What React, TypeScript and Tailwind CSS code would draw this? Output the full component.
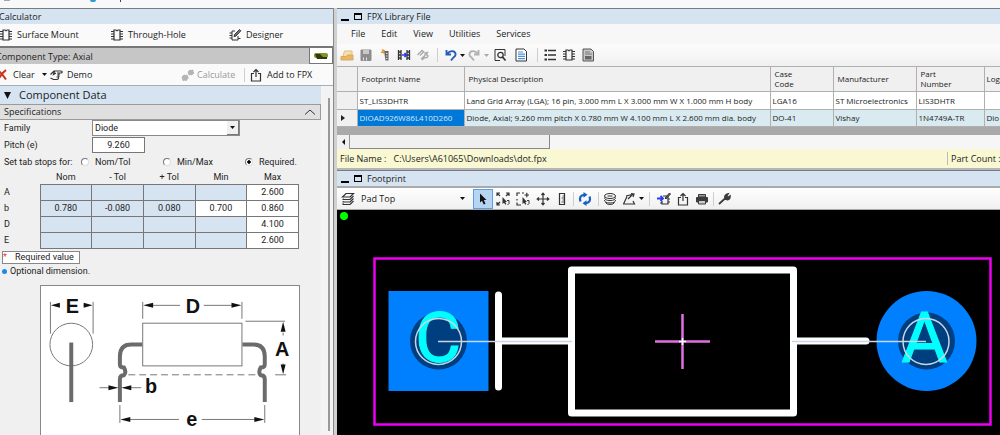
import React, { useState } from 'react';
import clsx from 'clsx';

interface IconProps {
  className?: string;
}

interface Dimension {
  name: string;
  values: string[];
}

interface Part {
  name: string;
  description: string;
  caseCode: string;
  manufacturer: string;
  partNumber: string;
  log: string;
}

const dimensions: Dimension[] = [
  { name: 'A', values: ['', '', '', '', '2.600'] },
  { name: 'b', values: ['0.780', '-0.080', '0.080', '0.700', '0.860'] },
  { name: 'D', values: ['', '', '', '', '4.100'] },
  { name: 'E', values: ['', '', '', '', '2.600'] },
];

const columns = ['Nom', '- Tol', '+ Tol', 'Min', 'Max'];

const parts: Part[] = [
  {
    name: 'ST_LIS3DHTR',
    description: 'Land Grid Array (LGA); 16 pin, 3.000 mm L X 3.000 mm W X 1.000 mm H body',
    caseCode: 'LGA16',
    manufacturer: 'ST Microelectronics',
    partNumber: 'LIS3DHTR',
    log: '',
  },
  {
    name: 'DIOAD926W86L410D260',
    description: 'Diode, Axial; 9.260 mm pitch X 0.780 mm W 4.100 mm L X 2.600 mm dia. body',
    caseCode: 'DO-41',
    manufacturer: 'Vishay',
    partNumber: '1N4749A-TR',
    log: 'Dio',
  },
];

/* ---------- Icons ---------- */

const Svg = ({ className, children }: IconProps & { children: React.ReactNode }) => (
  <svg viewBox="0 0 14 14" fill="none" stroke="#333" strokeWidth="1" className={clsx('size-3.5 shrink-0', className)} aria-hidden="true">
    {children}
  </svg>
);

const ChipIcon = () => (
  <Svg>
    <path d="M4 2h2q1 1.6 2 0h2v10H4zM1 3.5h3M1 6h3M1 8.5h3M1 11h3M10 3.5h3M10 6h3M10 8.5h3M10 11h3" strokeWidth="1.2" />
  </Svg>
);

const DesignIcon = () => (
  <Svg>
    <path d="M7 3H4v9h6V8M1.5 5H4M1.5 7.5H4M1.5 10H4M10 10.5h2.500" />
    <path d="M6 8.500l.5-2L11.500 1.500l1.300 1.300L8 8z" fill="#777" />
  </Svg>
);

const ClearIcon = () => (
  <Svg>
    <path d="M2 2.500q4 3 8 9M10 2q-5 4-8 10" stroke="#c8321e" strokeWidth="2" />
  </Svg>
);

const HandIcon = () => (
  <Svg>
    <path d="M1.500 6.500L5 3h7q1.200 0 1.200 1T12 5H8M8 5h1.200q1 0 1 1t-1 1H8M9 7q1 0 1 1t-1 1H7.500M8.800 9q.8 0 .8 1t-1.600 1.500H4.500L1.500 10M5.500 3L4.500 6.500 7 5" strokeWidth="1.200" />
  </Svg>
);

const GearsIcon = () => (
  <Svg>
    <path d="M9 2l1.500.5L12 2v2l1 1-1.500 1-.5 1-1.500-.5L8 7l-.5-2L7 4zM3 7l1.500.5L6 7l.5 2 1 1-1.500 1-.5 1.500-1.500-.5-2 .5L1.500 10.500 1 9z" fill="#b4b4b4" stroke="#b4b4b4" />
  </Svg>
);

const ExportIcon = () => (
  <Svg>
    <path d="M5 5.500H2.500V13h9V5.500H9M7 9V1.500M4.500 4L7 1.500 9.500 4" strokeWidth="1.200" />
  </Svg>
);

const FolderIcon = () => (
  <Svg>
    <path d="M2 11.500L4.500 3h7.500v8z" fill="#f8dfae" stroke="#e2bd7d" />
    <path d="M1 12V8.500h5L7.500 7H13v5z" fill="#e9b668" stroke="#d9a961" />
  </Svg>
);

const SaveIcon = () => (
  <Svg>
    <path d="M2 2h10v10.500H2z" fill="#8d8d8d" stroke="#8d8d8d" />
    <path d="M4 2h6v4H4z" fill="#c9c9c9" stroke="none" />
    <path d="M4.500 9.500v3M7.500 9.500v3" stroke="#ddd" />
  </Svg>
);

const NewPartIcon = () => (
  <Svg>
    <path d="M6 3h4.500v9.500H7.500z" fill="#666" stroke="none" />
    <path d="M8 5.500h1.500M8 8h1.500M8 10.500h1.500" stroke="#ddd" />
    <path d="M3 4.500l4-2M4 1.500l2.500 4M5.500 1.500v4" stroke="#dc9a33" strokeWidth="1.300" />
  </Svg>
);

const MergeIcon = () => (
  <Svg>
    <path d="M1.500 2v10M4 2v10M1 4h3M1 7h3M1 10h3M10 2v10M12.500 2v10M10 4h3M10 7h3M10 10h3" strokeWidth="1.300" />
    <path d="M5 7h4M7.500 5L9.500 7l-2 2" stroke="#2a3cf0" strokeWidth="1.700" />
  </Svg>
);

const WrenchIcon = () => (
  <Svg>
    <path
      d="M2 12L8 6.500M8.200 6.500q-1-3 1.600-4.200l1-.2-1.300 2.200 1.400 1.300 2-1.500q.2 3-2.500 3.400z"
      stroke="#3c3c3c"
      fill="#3c3c3c"
      strokeWidth="1.800"
    />
  </Svg>
);

const ToolsIcon = () => (
  <Svg>
    <path d="M1.500 7L6 2.500l2.500 2M4 7.500l4-4M5 11l4-3.500q-.5-3 2.500-3l-1 2 1.500 1.500q-1 2.500-3.500 1.500L6 12" stroke="#ababab" strokeWidth="1.400" />
  </Svg>
);

const UndoIcon = ({ muted = false }: { muted?: boolean }) => (
  <Svg className={clsx(muted && '-scale-x-100')}>
    <path d="M2.500 2v4.500H7M3 6q3-4 7-2.500 3.500 3-.5 6l-2.500 3" stroke={muted ? '#b2b2b2' : '#245fb4'} strokeWidth="1.900" />
  </Svg>
);

const PreviewIcon = () => (
  <Svg>
    <path d="M12 8V1.500H2v11h5" />
    <circle cx="7.500" cy="7" r="2.700" strokeWidth="1.300" />
    <path d="M9.500 9l3 3.500" strokeWidth="1.700" />
  </Svg>
);

const PageIcon = () => (
  <Svg>
    <path d="M2 1h8l2.500 2.500V13H2z" fill="#fff" />
    <path d="M4 4h5M4 6.200h7M4 8.400h7M4 10.600h7" stroke="#4a93d8" strokeWidth="1.200" />
  </Svg>
);

const ListIcon = () => (
  <Svg>
    <path d="M5 2.500h8M5 7h8M5 11.500h8" strokeWidth="1.500" />
    <path d="M1.500 2.500H4M1.500 7H4M1.500 11.500H4" strokeWidth="2.200" />
  </Svg>
);

const ReportIcon = () => (
  <Svg>
    <path d="M2 1h8l2.500 2.500V13H2z" fill="#c8c8c8" stroke="#555" />
    <path d="M4 4h5M4 6h7" stroke="#777" />
    <path d="M4 8h6.500v3.500H4z" fill="#666" stroke="none" />
  </Svg>
);

const LayersIcon = () => (
  <Svg>
    <path d="M1.500 5l3.500-3.500h7.500L9 5zM12.500 4L9 7.500H2M12.500 6.500L9 10H2M12.500 9L9 12.500H1.500M3 7l-1.500.5M3 9.500L1.500 10M2.500 11.500l-1 1" strokeWidth="1.200" />
  </Svg>
);

const PointerIcon = () => (
  <Svg>
    <path d="M4 1.500v9l2-1.800 1.700 3.800 1.800-.8L7.800 8h2.700z" fill="#111" stroke="none" />
  </Svg>
);

const SelectIcon = ({ plus = false }: { plus?: boolean }) => (
  <Svg>
    <path d={plus ? 'M4 1H1v3M1 7v1.500M1 10.500V13h4M6 1h2M8.500 3H13M10.800 .8v4.400' : 'M1 4V1h3M1.200 1.200L4 4M10 1h3v3M13 1l-3 3M1 10v3h3M1 13l3-3'} strokeWidth="1.200" />
    <path d="M6.500 5v7l1.500-1.200 1.300 2 1-.7-1-2H11z" fill="#333" stroke="none" />
    <path d="M11 8.500h2v3l-1.500 1.500" />
  </Svg>
);

const MoveIcon = () => (
  <Svg>
    <path d="M7 1v12M1 7h12M5.500 3L7 1.200 8.500 3M5.500 11L7 12.800 8.500 11M3 5.500L1.200 7 3 8.500M11 5.500L12.800 7 11 8.500" strokeWidth="1.200" />
  </Svg>
);

const RulerIcon = () => (
  <Svg>
    <path d="M4.500 1.500h5v11h-5z" strokeWidth="1.200" />
    <path d="M7.500 4h2M6.500 6h3M7.500 8h2M6.500 10h3" strokeWidth=".8" />
  </Svg>
);

const RefreshIcon = () => (
  <Svg>
    <path d="M2.500 9.500Q.5 4 6 2.800M11.500 4.500q2 5.500-3.500 6.700" stroke="#155ec2" strokeWidth="2.200" />
    <path d="M5.500 0l4 2.800-4 3zM8.500 8.200l-4 3 4 2.800z" fill="#155ec2" stroke="none" />
  </Svg>
);

const StackIcon = () => (
  <Svg>
    <ellipse cx="7" cy="4" rx="5.500" ry="2.500" />
    <path d="M4.500 4h5" />
    <path d="M1.500 5.500q0 3 5.500 3t5.500-3M1.500 8q0 3 5.500 3t5.500-3M2.500 10.500q1 2 4.500 2t4.500-2" />
  </Svg>
);

const MeasureIcon = () => (
  <Svg>
    <path d="M1 12h11.500L11 9M1.500 12L5 4.500M4 4l6-1.500M6 7l5-5M9 1.500l3 .5-1 3" strokeWidth="1.200" />
  </Svg>
);

const SendChipIcon = () => (
  <Svg>
    <path d="M6 4h5v8H5V9M11 7h2M11 10h2M3 11h2" strokeWidth="1.200" />
    <path d="M8 6l4.500-5 1 1L9 7z" fill="#666" />
    <path d="M0 6.500h5M3.500 4L6 6.500 3.500 9" stroke="#2a3cf0" strokeWidth="1.800" />
  </Svg>
);

const PrintIcon = () => (
  <Svg>
    <path d="M3.500 2.500h7V5h-7z" fill="#999" stroke="#3b3b3b" />
    <path d="M1.500 5.500h11v4.500h-11z" fill="#3b3b3b" stroke="#3b3b3b" />
    <path d="M3.500 8.500h7V12h-7z" fill="#ccc" stroke="#3b3b3b" />
  </Svg>
);

const Caret = ({ muted = false }: { muted?: boolean }) => (
  <svg viewBox="0 0 5 3" className={clsx('w-[5px] h-[3px] shrink-0', muted ? 'fill-[#aaa]' : 'fill-[#111]')} aria-hidden="true">
    <path d="M0 0h5L2.500 3z" />
  </svg>
);

/* ---------- Small building blocks ---------- */

const Separator = () => <span className="w-px h-3.5 bg-[#cfcfcf] shrink-0" />;

interface ToolProps {
  label: string;
  className?: string;
  children: React.ReactNode;
}

const Tool = ({ label, className, children }: ToolProps) => (
  <button type="button" aria-label={label} className={clsx('flex items-center justify-center shrink-0', className)}>
    {children}
  </button>
);

const PaneHeader = ({ title }: { title: string }) => (
  <div className="flex items-center h-4 bg-[#d6e4f2] border-t border-[#777b82] pl-1 gap-[5px]">
    <button type="button" aria-label="Minimize" className="w-2 h-2 border-b-2 border-black" />
    <button type="button" aria-label="Maximize" className="w-2 h-[7px] border border-t-2 border-black" />
    <h2 className="text-[9px] leading-[14px]">{title}</h2>
  </div>
);

/* ---------- Axial lead drawing ---------- */

function AxialDrawing() {
  return (
    <svg viewBox="40 285 260 164" className="block w-full" role="img" aria-label="Axial component dimensions">
      <g fill="none" stroke="#777" strokeWidth="1">
        <circle cx="70.500" cy="344" r="21.500" />
        <rect x="142.500" y="322.500" width="100" height="43" />
        <path d="M49.500 301v32M92.500 301v32M142.500 301v17M242.500 301v17M246 320.500h40M276 374.500h11M119.500 405v18M265.500 405v18" />
        <path d="M128 374.500h132" strokeDasharray="7 4" />
        <path d="M56 304.500h3M83 304.500h3M151 304.500h29M204 304.500h30M284 332v3M284 363v3M99 387.500h10M130 387.500h11M128 419.500h51M202 419.500h56" />
      </g>
      <g fill="none" stroke="#6b6b6b" strokeWidth="4">
        <path d="M70.500 342v60" />
        <path d="M142 344h-11q-11.500 0-11.500 12v8q0 3 4 3 3 5 0 8-4 0-4 4v23" />
        <path d="M243 344h11q11.500 0 11.500 12v8q0 3-4 3-3 5 0 8 4 0 4 4v23" />
      </g>
      <g fill="#111">
        <path d="M50 304.500l9-2.500v5zM92 304.500l-9-2.500v5zM143 304.500l10-2.500v5zM242 304.500l-10-2.500v5z" />
        <path d="M284 321l-2.500 10h5zM284 374l-2.500-10h5zM118 387.500l-10-2.500v5zM121 387.500l10-2.500v5z" />
        <path d="M120 419.500l10-2.500v5zM265 419.500l-10-2.500v5z" />
      </g>
      <g className="font-bold" fill="#111" fontFamily="'Liberation Sans', Arial, sans-serif" fontSize="20" textAnchor="middle">
        <text x="71.500" y="312">E</text>
        <text x="193" y="312">D</text>
        <text x="283" y="356">A</text>
        <text x="151" y="393">b</text>
        <text x="192" y="426">e</text>
      </g>
    </svg>
  );
}

/* ---------- Footprint canvas ---------- */

function FootprintCanvas() {
  return (
    <svg viewBox="337 210 663 225" className="block w-full" role="img" aria-label="Axial diode footprint, pad top">
      <circle cx="344" cy="216" r="4" fill="#00ff00" />
      <rect x="374.500" y="258.500" width="616" height="166" fill="none" stroke="#f000f0" strokeWidth="2.500" />
      <rect x="388.500" y="291" width="100" height="100" fill="#007fff" />
      <circle cx="926.500" cy="341" r="50" fill="#007fff" />
      <circle cx="438.500" cy="341" r="28.500" fill="#003f7f" />
      <circle cx="926.500" cy="341" r="28.500" fill="#003f7f" />
      <g fill="none" stroke="#fff" strokeWidth="7" strokeLinecap="round" strokeLinejoin="round">
        <path d="M498.500 295v92M500 341h71M797 341h69" />
        <rect x="571.500" y="270" width="222" height="143" />
      </g>
      <g fill="#00ffff" stroke="#00ffff" strokeWidth="1" fontFamily="Roboto, 'Liberation Sans', sans-serif" fontSize="71" textAnchor="middle">
        <text x="438" y="362">C</text>
        <text x="924.500" y="362">A</text>
      </g>
      <g fill="none" stroke="#c9d6e6" strokeWidth="1.500">
        <circle cx="438.500" cy="341.500" r="23" />
        <circle cx="926" cy="341.500" r="23" />
        <path d="M438 341.500h134M792 341.500h134" />
      </g>
      <path d="M655 341.500h55M682.500 314v55" stroke="#e070e0" strokeWidth="2.500" />
      <path d="M679 341.500h7M682.500 338v7" stroke="#fff" strokeWidth="1.500" />
    </svg>
  );
}

/* ---------- Left side ---------- */

function Calculator() {
  const [family, setFamily] = useState('Diode');
  const [pitch, setPitch] = useState('9.260');
  const [tabStops, setTabStops] = useState('Required.');

  return (
    <aside className="w-[334px] shrink-0 flex flex-col bg-[#f0f0f0] border-r border-[#8a8a8a] overflow-hidden">
      <h2 className="h-4 border-t border-[#777b82] bg-[#d6e4f2] text-[9px] leading-[15px]">
        <span className="-ml-px">Calculator</span>
      </h2>

      <nav className="h-[22px] flex items-center bg-[#fafafa] text-[9px]">
        <button type="button" className="w-[111px] flex items-center gap-1 -ml-px"><ChipIcon />Surface Mount</button>
        <button type="button" className="w-[118px] flex items-center gap-1"><ChipIcon />Through-Hole</button>
        <button type="button" className="flex items-center gap-1"><DesignIcon />Designer</button>
      </nav>

      <div className="h-[18px] flex justify-between border-t-2 border-[#777] bg-[#c6c6c6] text-[9px] leading-[17px]">
        <span className="-ml-1">Component Type: Axial</span>
        <span className="w-6 flex items-center justify-center bg-white border border-t-0 border-[#777]">
          <svg viewBox="0 0 14 6" className="w-3.5 h-1.5" aria-hidden="true">
            <rect x="0" y="0" width="14" height="5" rx="2" fill="#85942a" />
            <path d="M1 1h5l3 3h4v2H3z" fill="#303b10" />
          </svg>
        </span>
      </div>

      <div className="h-[22px] flex items-center bg-[#fafafa] border-b border-[#a9adb2] text-[9px]">
        <button type="button" className="w-[53px] flex items-center gap-[3px] -ml-1"><ClearIcon />Clear<span className="ml-1"><Caret /></span></button>
        <button type="button" className="w-[132px] flex items-center gap-1"><HandIcon />Demo</button>
        <button type="button" className="w-[63px] flex items-center gap-0.5 text-[#999]" disabled><GearsIcon />Calculate</button>
        <Separator />
        <button type="button" className="flex items-center gap-1 ml-1"><ExportIcon />Add to FPX</button>
      </div>

      <div className="flex flex-1 min-h-0">
        <div className="flex-1 min-w-0">
          <button type="button" className="w-full h-[18px] flex items-center gap-2 pl-1 bg-[#d6e4f2] text-[11px] leading-4">
            <svg viewBox="0 0 7 7" className="size-[7px]" aria-hidden="true"><path d="M0 0h7L3.500 7z" fill="#111" /></svg>
            Component Data
          </button>
          <button type="button" className="w-full h-4 flex items-center justify-between pl-1 pr-1 bg-[#e0e0e0] border border-l-0 border-[#9a9a9a] text-[9px] leading-[14px]">
            Specifications
            <svg viewBox="0 0 12 6" className="w-3 h-1.5" fill="none" stroke="#333" aria-hidden="true"><path d="M1 5.500L6 1l5 4.500" /></svg>
          </button>

          <form className="font-[Roboto,'Liberation_Sans',sans-serif] text-[9px] leading-3" onSubmit={(e) => e.preventDefault()}>
            <div className="h-4 flex items-center pl-1">
              <label htmlFor="family" className="w-[88px]">Family</label>
              <div className="relative w-[148px]">
                <select
                  id="family"
                  value={family}
                  onChange={(e) => setFamily(e.target.value)}
                  className="block w-full h-4 appearance-none bg-white border border-[#8a8a8a] pl-0.5 leading-[14px]"
                >
                  <option>Diode</option>
                  <option>Resistor</option>
                </select>
                <span className="pointer-events-none absolute right-px top-px w-3 h-3.5 flex items-center justify-center bg-[#f0f0f0] border-r border-b border-[#777]">
                  <Caret />
                </span>
              </div>
            </div>
            <div className="h-[17px] flex items-center pl-1">
              <label htmlFor="pitch" className="w-[88px]">Pitch (e)</label>
              <input
                id="pitch"
                value={pitch}
                onChange={(e) => setPitch(e.target.value)}
                className="w-[53px] h-4 bg-white border border-[#777] text-center"
              />
            </div>
            <fieldset className="h-[18px] flex items-center pl-1">
              <legend className="float-left w-[77px]">Set tab stops for:</legend>
              {['Nom/Tol', 'Min/Max', 'Required.'].map((option) => (
                <label key={option} className="w-[82px] flex items-center gap-1.5 whitespace-nowrap">
                  <input
                    type="radio"
                    name="tabStops"
                    checked={tabStops === option}
                    onChange={() => setTabStops(option)}
                    className="appearance-none size-2 rounded-full bg-white border border-[#ddd] border-t-[#777] border-l-[#777] checked:bg-[radial-gradient(#000_35%,#fff_45%)]"
                  />
                  {option}
                </label>
              ))}
            </fieldset>

            <table className="table-fixed border-collapse w-[299px]">
              <thead>
                <tr className="h-[13px]">
                  <th className="w-10" aria-label="Dimension" />
                  {columns.map((c) => (
                    <th key={c} className="font-normal p-0">{c}</th>
                  ))}
                </tr>
              </thead>
              <tbody>
                {dimensions.map((dim) => (
                  <tr key={dim.name} className="h-4">
                    <th className="p-0 pl-1 text-left font-normal">{dim.name}</th>
                    {dim.values.map((value, i) => (
                      <td key={columns[i]} className="p-0 border border-[#777]">
                        <input
                          aria-label={`${dim.name} ${columns[i]}`}
                          defaultValue={value}
                          className={clsx(
                            'block w-full h-[15px] text-center',
                            i === 4 || (i === 3 && value) ? 'bg-white' : 'bg-[#d6e4f2]'
                          )}
                        />
                      </td>
                    ))}
                  </tr>
                ))}
              </tbody>
            </table>

            <p className="relative ml-0.5 mt-0.5 w-[78px] h-[13px] bg-white border border-[#888] pl-3 leading-[11px] whitespace-nowrap">
              <span className="absolute left-0 top-0 text-red-500">*</span>
              Required value
            </p>
            <p className="flex items-center gap-[3px] pl-0.5 h-[15px]">
              <span className="size-[5px] rounded-full bg-[#1f87e8]" />
              Optional dimension.
            </p>
          </form>

          <div className="mt-1.5 ml-10 w-[260px] bg-white border border-[#888]">
            <AxialDrawing />
          </div>
        </div>
        <div className="w-3 flex justify-end pr-[3px] pt-3 pb-1 bg-[#f3f3f3]">
          <span className="w-0.5 bg-[#999]" />
        </div>
      </div>
    </aside>
  );
}

/* ---------- Right side ---------- */

function LibraryFile() {
  return (
    <section>
      <PaneHeader title="FPX Library File" />
      <nav className="h-5 flex items-center gap-4 pl-3.5 bg-[#f7f7f7] text-[9px]">
        {['File', 'Edit', 'View', 'Utilities', 'Services'].map((item) => (
          <button key={item} type="button">{item}</button>
        ))}
      </nav>
      <div className="h-[22px] flex items-center pl-[3px] bg-linear-to-b from-[#fcfcfc] to-[#f0f0f0]">
        <Tool label="Open" className="w-[14px]"><FolderIcon /></Tool>
        <Tool label="Save" className="w-6"><SaveIcon /></Tool>
        <Tool label="New part" className="w-[14px]"><NewPartIcon /></Tool>
        <Tool label="Merge" className="w-6"><MergeIcon /></Tool>
        <Tool label="Tools" className="w-[14px]"><ToolsIcon /></Tool>
        <span className="w-3 flex justify-end pr-1"><Separator /></span>
        <Tool label="Undo" className="w-[18px]"><UndoIcon /></Tool>
        <Tool label="Undo history" className="w-1"><Caret /></Tool>
        <Tool label="Redo" className="w-5"><UndoIcon muted /></Tool>
        <Tool label="Redo history" className="w-1"><Caret muted /></Tool>
        <Tool label="Preview" className="w-6"><PreviewIcon /></Tool>
        <Tool label="Page" className="w-[18px]"><PageIcon /></Tool>
        <span className="w-3.5 flex justify-center"><Separator /></span>
        <Tool label="List" className="w-3"><ListIcon /></Tool>
        <Tool label="Chip" className="w-[26px]"><ChipIcon /></Tool>
        <Tool label="Report" className="w-3"><ReportIcon /></Tool>
      </div>

      <div className="bg-[#a9a9a9] pb-2">
        <table className="table-fixed w-full border-collapse text-[8px] leading-[10px] whitespace-nowrap">
          <colgroup>
            <col className="w-5" />
            <col className="w-[107px]" />
            <col className="w-[306px]" />
            <col className="w-[63px]" />
            <col className="w-[83px]" />
            <col className="w-[68px]" />
            <col />
          </colgroup>
          <thead>
            <tr className="h-[25px] bg-[#f0f0f0] text-left border-t border-b border-[#b0b0b0] *:font-normal *:border-r *:border-[#b0b0b0] *:last:border-r-0 *:p-0 *:pl-1 *:last:pl-0.5">
              <th aria-label="Row" />
              <th>Footprint Name</th>
              <th>Physical Description</th>
              <th>Case<br />Code</th>
              <th>Manufacturer</th>
              <th>Part<br />Number</th>
              <th>Log</th>
            </tr>
          </thead>
          <tbody>
            {parts.map((part, i) => (
              <tr
                key={part.name}
                className={clsx(
                  'border-b border-[#b0b0b0] *:border-r *:border-[#b0b0b0] *:last:border-r-0 *:p-0 *:pl-0.5',
                  i === 1 ? 'h-[17px] bg-[#d9eaf1]' : 'h-[18px] bg-white'
                )}
              >
                <td className="bg-[#f0f0f0]">
                  {i === 1 && (
                    <svg viewBox="0 0 4 6" className="w-1 h-1.5 ml-0.5" aria-hidden="true"><path d="M0 0l4 3-4 3z" fill="#222" /></svg>
                  )}
                </td>
                <td className={clsx(i === 1 && 'bg-[#0078d7] text-[#d5e8fa]')}>{part.name}</td>
                <td>{part.description}</td>
                <td>{part.caseCode}</td>
                <td>{part.manufacturer}</td>
                <td>{part.partNumber}</td>
                <td>{part.log}</td>
              </tr>
            ))}
          </tbody>
        </table>
      </div>

      <div className="h-3.5 flex bg-[#f6f6f6]">
        <button type="button" aria-label="Scroll left" className="w-[13px] flex items-center justify-center bg-[#f0f0f0] border-r border-[#999]">
          <svg viewBox="0 0 3 6" className="w-[3px] h-1.5" aria-hidden="true"><path d="M3 0v6L0 3z" fill="#111" /></svg>
        </button>
        <span className="w-[200px] bg-[#f0f0f0] border-r border-b border-[#888]" />
      </div>

      <div className="h-[19px] flex items-center justify-between bg-[#f9f8d2] pl-[3px] text-[9px] whitespace-nowrap">
        <span>File Name :&nbsp;&nbsp; C:\Users\A61065\Downloads\dot.fpx</span>
        <span className="w-[53px] border-l border-[#bbb] pl-[3px]">Part Count :</span>
      </div>
    </section>
  );
}

function Footprint() {
  return (
    <section className="flex-1 border-t-2 border-[#b5b5b5] bg-black">
      <PaneHeader title="Footprint" />
      <div className="h-6 flex items-center border-t-2 border-b border-[#aaa] bg-linear-to-b from-[#fefefe] to-[#f0f0f0] pl-1">
        <LayersIcon />
        <label className="relative flex items-center w-[112px] ml-1.5">
          <select aria-label="Layer" defaultValue="Pad Top" className="w-full appearance-none bg-transparent text-[9px] leading-[18px]">
            <option>Pad Top</option>
            <option>Pad Bottom</option>
          </select>
          <span className="pointer-events-none absolute right-2"><Caret /></span>
        </label>
        <Tool label="Select" className="w-5 h-5 bg-[#b5d5f3] border border-[#5c9fdc]"><PointerIcon /></Tool>
        <Tool label="Select region" className="w-5"><SelectIcon /></Tool>
        <Tool label="Add to selection" className="w-5"><SelectIcon plus /></Tool>
        <Tool label="Move" className="w-5"><MoveIcon /></Tool>
        <Tool label="Ruler" className="w-[18px]"><RulerIcon /></Tool>
        <span className="w-1 flex justify-center"><Separator /></span>
        <Tool label="Refresh" className="w-5"><RefreshIcon /></Tool>
        <span className="w-1.5 flex justify-center"><Separator /></span>
        <Tool label="Stack" className="w-[18px]"><StackIcon /></Tool>
        <Tool label="Measure" className="w-5"><MeasureIcon /></Tool>
        <Tool label="Measure options" className="w-1"><Caret /></Tool>
        <span className="w-3 flex justify-center"><Separator /></span>
        <Tool label="Send to library" className="w-[18px]"><SendChipIcon /></Tool>
        <Tool label="Export" className="w-5"><ExportIcon /></Tool>
        <Tool label="Print" className="w-[18px]"><PrintIcon /></Tool>
        <span className="w-1 flex justify-center"><Separator /></span>
        <Tool label="Settings" className="w-[18px]"><WrenchIcon /></Tool>
      </div>
      <FootprintCanvas />
    </section>
  );
}

export default function App() {
  return (
    <div className="h-screen flex flex-col overflow-hidden bg-[#f6f6f6] font-['Open_Sans','Noto_Sans',sans-serif] text-[#222]">
      <div className="h-2 shrink-0 flex items-start bg-[#f8f8f8]">
        <span className="w-1.5 h-px ml-1 bg-[#9ab]" />
        <span className="w-1.5 h-0.5 ml-20 bg-[#2f9bd6] rounded-b-full" />
        <span className="w-px h-0.5 ml-6 bg-[#444]" />
      </div>
      <div className="flex-1 min-h-0 flex gap-[3px] bg-[#d0d0d0]">
        <Calculator />
        <main className="flex-1 min-w-0 flex flex-col overflow-hidden">
          <LibraryFile />
          <Footprint />
        </main>
      </div>
    </div>
  );
}
